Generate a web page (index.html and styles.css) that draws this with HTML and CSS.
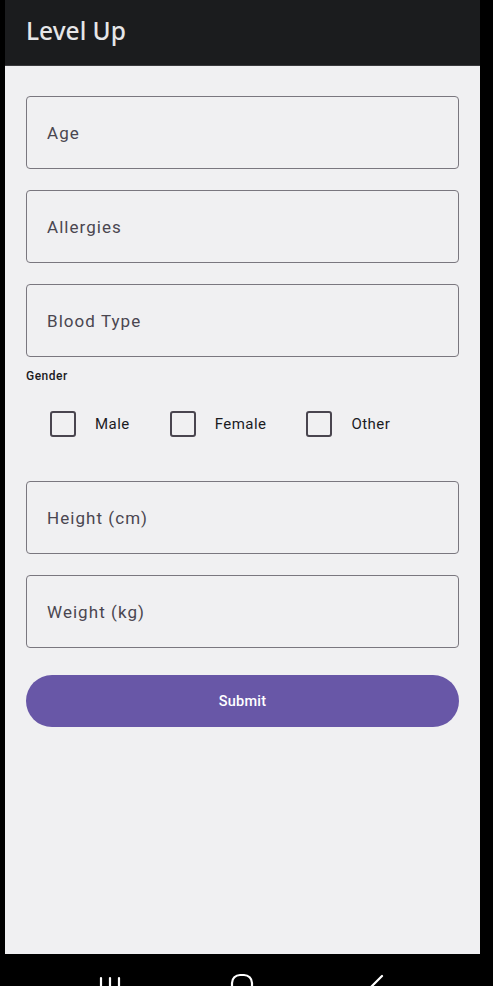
FILE: index.html
```
<!DOCTYPE html>
<html>
<head>
<meta charset="utf-8">
<link rel="stylesheet" href="styles.css">
</head>
<body>
<div class="screen">
  <header class="topbar"><h1 class="title">Level Up</h1></header>
  <main class="content">
    <div class="field"><span class="ph">Age</span></div>
    <div class="field"><span class="ph">Allergies</span></div>
    <div class="field"><span class="ph">Blood Type</span></div>
    <div class="gender-label">Gender</div>
    <div class="checks">
      <label class="check"><span class="box"></span><span class="cl">Male</span></label>
      <label class="check"><span class="box"></span><span class="cl">Female</span></label>
      <label class="check"><span class="box"></span><span class="cl">Other</span></label>
    </div>
    <div class="field"><span class="ph">Height (cm)</span></div>
    <div class="field"><span class="ph">Weight (kg)</span></div>
    <button class="submit">Submit</button>
  </main>
</div>
<nav class="navbar">
  <svg class="nav-ic" width="493" height="32" viewBox="0 0 493 32">
    <g stroke="#fff" stroke-width="2.2" fill="none" stroke-linecap="round">
      <line x1="101" y1="24" x2="101" y2="34"/>
      <line x1="110" y1="24" x2="110" y2="34"/>
      <line x1="119" y1="24" x2="119" y2="34"/>
      <rect x="232" y="21" width="20" height="20" rx="8"/>
      <line x1="382" y1="22" x2="370" y2="34"/>
    </g>
  </svg>
</nav>
</body>
</html>
```
FILE: styles.css
```
html, body {
  margin: 0;
  padding: 0;
  background: #000;
  font-family: Roboto, "Noto Sans", "Liberation Sans", sans-serif;
}
.screen {
  margin-left: 5px;
  width: 475px;
  height: 954px;
  display: flex;
  flex-direction: column;
  background: #f0f0f2;
}
.topbar {
  background: #1b1c1e;
  border-bottom: 1px solid #3a3a3d;
  display: flex;
  align-items: center;
  padding-left: 21px;
  box-sizing: border-box;
  height: 66px;
}
.title {
  margin: 0;
  font-family: "Noto Sans", "Open Sans", sans-serif;
  font-size: 24.5px;
  font-weight: 500;
  color: #e6e6e8;
  position: relative;
  top: -2px;
}
.content {
  flex: 1;
  padding: 30px 21px 0 21px;
  display: flex;
  flex-direction: column;
}
.field {
  height: 73px;
  box-sizing: border-box;
  border: 1px solid #7a777f;
  border-radius: 4px;
  display: flex;
  align-items: center;
  padding-left: 20px;
  margin-bottom: 21px;
}
.ph {
  font-size: 17px;
  color: #4a4650;
  letter-spacing: 1.05px;
}
.gender-label {
  margin-top: -10px;
  font-size: 12px;
  font-weight: 500;
  color: #1b1b1f;
  letter-spacing: 0.5px;
  line-height: 16px;
}
.checks {
  display: flex;
  align-items: center;
  height: 48px;
  margin-top: 16px;
  margin-bottom: 33px;
  padding-left: 24px;
}
.check {
  display: flex;
  align-items: center;
}
.box {
  width: 26px;
  height: 26px;
  box-sizing: border-box;
  border: 2.5px solid #49454f;
  border-radius: 3px;
}
.cl {
  font-size: 15px;
  color: #1b1b1f;
  margin-left: 19px;
  margin-right: 40px;
  letter-spacing: 0.45px;
}
.submit {
  margin-top: 6px;
  height: 52px;
  border: none;
  border-radius: 26px;
  background: #6857a7;
  color: #fff;
  font-family: Roboto, "Noto Sans", sans-serif;
  font-size: 14.5px;
  font-weight: 500;
  letter-spacing: 0.2px;
}
.navbar {
  height: 32px;
  background: #000;
  overflow: hidden;
}
.nav-ic {
  display: block;
}
```
